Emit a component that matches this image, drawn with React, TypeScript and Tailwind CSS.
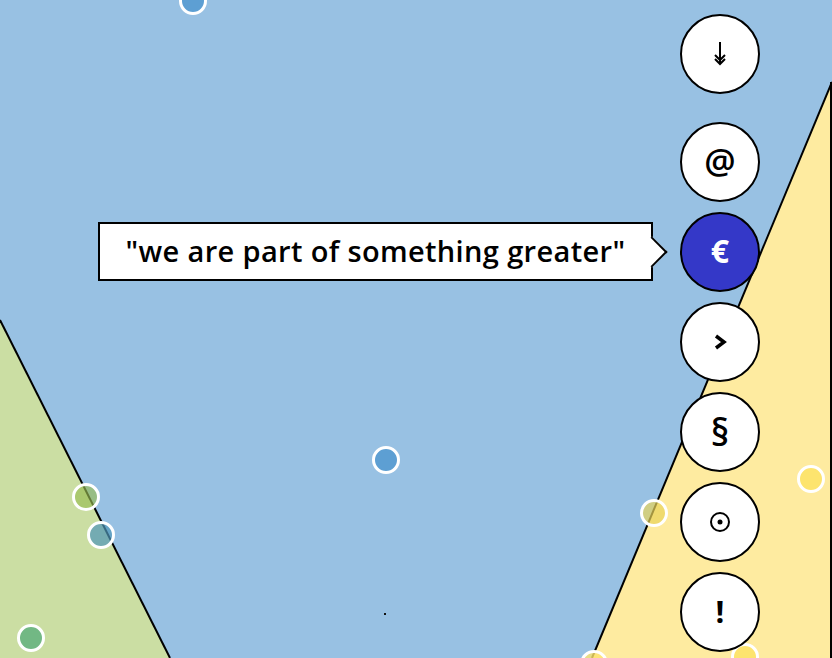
import React from 'react';

type Dot = { x: number; y: number; fill: string; opacity?: number };

const dots: Dot[] = [
  { x: 193, y: 1, fill: '#5d9fd3' },
  { x: 386, y: 460, fill: '#5d9fd3' },
  { x: 86, y: 497, fill: '#98bc52', opacity: 0.65 },
  { x: 101, y: 535, fill: '#4f96b8', opacity: 0.7 },
  { x: 31, y: 638, fill: '#72b884' },
  { x: 654, y: 513, fill: '#e8d35a', opacity: 0.7 },
  { x: 811, y: 479, fill: '#fde46e' },
  { x: 745, y: 657, fill: '#fde46e' },
  { x: 594, y: 664, fill: '#fde46e', opacity: 0.8 },
];

function MapLayer() {
  return (
    <svg className="absolute inset-0" width={832} height={658} viewBox="0 0 832 658">
      <rect width={832} height={658} fill="#98c1e3" />
      <polygon points="0,320 170,658 0,658" fill="#cbdea3" />
      <line x1={0} y1={320} x2={170} y2={658} stroke="#000" strokeWidth={2} />
      <polygon points="832,82 592,658 832,658" fill="#feeba0" />
      <line x1={832} y1={82} x2={592} y2={658} stroke="#000" strokeWidth={2} />
      <line x1={831} y1={82} x2={831} y2={658} stroke="#000" strokeWidth={2} />
      {dots.map((d, i) => (
        <circle
          key={i}
          cx={d.x}
          cy={d.y}
          r={12.5}
          fill={d.fill}
          fillOpacity={d.opacity ?? 1}
          stroke="#fff"
          strokeWidth={3}
        />
      ))}
      <rect x={384} y={613} width={2} height={2} fill="#111" />
    </svg>
  );
}

function RoundButton({ children, active }: { children: React.ReactNode; active?: boolean }) {
  return (
    <div
      className={
        active
          ? 'w-[80px] h-[80px] rounded-full border-2 border-black bg-[#3438c8] text-white flex items-center justify-center'
          : 'w-[80px] h-[80px] rounded-full border-2 border-black bg-white text-black flex items-center justify-center'
      }
    >
      {children}
    </div>
  );
}

export default function App() {
  const symbolFont = { fontFamily: '"Open Sans", "DejaVu Sans", sans-serif' };
  return (
    <div className="relative w-[832px] h-[658px] overflow-hidden bg-[#98c1e3]">
      <MapLayer />

      <div className="absolute left-[98px] top-[222px] w-[555px] h-[59px] bg-white border-2 border-black flex items-center justify-center">
        <span
          className="text-[29px] font-semibold text-black leading-none tracking-[0.35px] mt-[-2px]"
          style={{ fontFamily: '"Open Sans", "Noto Sans", sans-serif' }}
        >
          "we are part of something greater"
        </span>
        <div className="absolute right-[-12px] top-[17px] w-[22px] h-[22px] rotate-45 bg-white border-t-2 border-r-2 border-black" />
      </div>

      <div className="absolute left-[680px] top-[14px] flex flex-col gap-[10px]" style={symbolFont}>
        <div className="mb-[18px]">
          <RoundButton>
            <svg width="14" height="24" viewBox="0 0 14 24" className="mt-[-1px]">
              <line x1="7" y1="0" x2="7" y2="22" stroke="#000" strokeWidth="2" />
              <polyline points="2,13 7,18 12,13" fill="none" stroke="#000" strokeWidth="2" />
              <polyline points="2,17 7,22 12,17" fill="none" stroke="#000" strokeWidth="2" />
            </svg>
          </RoundButton>
        </div>
        <RoundButton>
          <span className="text-[35px] font-semibold leading-none mt-[-4px]">@</span>
        </RoundButton>
        <RoundButton active>
          <span className="text-[32px] font-bold leading-none mt-[-2px]">€</span>
        </RoundButton>
        <RoundButton>
          <svg width="14" height="16" viewBox="0 0 14 16">
            <polyline points="3,2 11,8 3,14" fill="none" stroke="#000" strokeWidth="3.5" />
          </svg>
        </RoundButton>
        <RoundButton>
          <span className="text-[37px] font-semibold leading-none mt-[-1px]">§</span>
        </RoundButton>
        <RoundButton>
          <svg width="22" height="22" viewBox="0 0 22 22">
            <circle cx="11" cy="11" r="9" fill="none" stroke="#000" strokeWidth="2" />
            <circle cx="11" cy="11" r="2.5" fill="#000" />
          </svg>
        </RoundButton>
        <RoundButton>
          <span className="text-[31px] font-bold leading-none mt-[-2px]">!</span>
        </RoundButton>
      </div>
    </div>
  );
}
